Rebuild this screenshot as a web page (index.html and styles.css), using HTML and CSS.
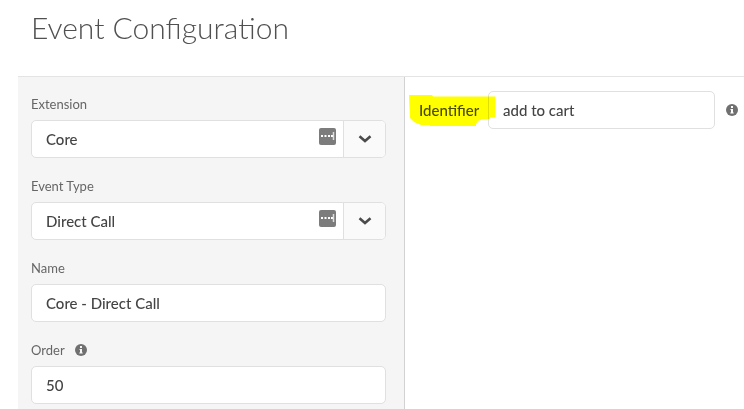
FILE: index.html
```html
<!DOCTYPE html>
<html lang="en">
<head>
    <meta charset="UTF-8">
    <meta name="viewport" content="width=device-width, initial-scale=1.0">
    <title>Event Configuration</title>
    <link rel="stylesheet" href="styles.css">
</head>
<body>
    <header class="page-header">
        <h1>Event Configuration</h1>
    </header>

    <main class="content">
        <form class="sidebar">
            <div class="field">
                <label for="extension">Extension</label>
                <div class="select-box">
                    <select id="extension">
                        <option>Core</option>
                    </select>
                    <svg class="autofill" viewBox="0 0 17 17" aria-hidden="true">
                        <rect width="17" height="17" rx="2" fill="#7c7c7c"/>
                        <path d="M2 7h2v2H2zM5.500 7h2v2h-2zM9 7h2v2H9zM12 7h2v2h-2z" fill="#fff"/>
                        <path d="M14.500 4v8" stroke="#ddd" stroke-width="1.500"/>
                    </svg>
                    <span class="arrow">
                        <svg viewBox="0 0 14 8" aria-hidden="true"><path d="M1.500 1.200L7 6l5.500-4.800"/></svg>
                    </span>
                </div>
            </div>

            <div class="field">
                <label for="eventType">Event Type</label>
                <div class="select-box">
                    <select id="eventType">
                        <option>Direct Call</option>
                    </select>
                    <svg class="autofill" viewBox="0 0 17 17" aria-hidden="true">
                        <rect width="17" height="17" rx="2" fill="#7c7c7c"/>
                        <path d="M2 7h2v2H2zM5.500 7h2v2h-2zM9 7h2v2H9zM12 7h2v2h-2z" fill="#fff"/>
                        <path d="M14.500 4v8" stroke="#ddd" stroke-width="1.500"/>
                    </svg>
                    <span class="arrow">
                        <svg viewBox="0 0 14 8" aria-hidden="true"><path d="M1.500 1.200L7 6l5.500-4.800"/></svg>
                    </span>
                </div>
            </div>

            <div class="field">
                <label for="name">Name</label>
                <input type="text" id="name" value="Core - Direct Call">
            </div>

            <div class="field">
                <label for="order">Order
                    <svg class="info" viewBox="0 0 12 12" aria-hidden="true">
                        <circle cx="6" cy="6" r="6" fill="#707070"/>
                        <path d="M5 2h2v2H5zM4.500 5H7v3.500h.7v1H4.300v-1H5V6h-.5z" fill="#f5f5f5"/>
                    </svg>
                </label>
                <input type="text" id="order" value="50">
            </div>
        </form>

        <form class="details">
            <div class="identifier">
                <label for="identifier">Identifier</label>
                <input type="text" id="identifier" value="add to cart">
                <svg class="info" viewBox="0 0 12 12" aria-hidden="true">
                    <circle cx="6" cy="6" r="6" fill="#707070"/>
                    <path d="M5 2h2v2H5zM4.500 5H7v3.500h.7v1H4.300v-1H5V6h-.5z" fill="#fff"/>
                </svg>
                <!-- marker stroke over the label -->
                <svg class="marker" viewBox="0 0 87 32" aria-hidden="true">
                    <path d="M0 0H23L24 1.500H86.500V22.500H81V24H74L69 26L67 29V31H21V30H12L5 27L1 23Z" fill="#ffff00"/>
                </svg>
            </div>
        </form>
    </main>
</body>
</html>
```
FILE: styles.css
```css
* {
    box-sizing: border-box;
}
body {
    margin: 0;
    min-height: 100vh;
    display: flex;
    flex-direction: column;
    font-family: Lato, "Open Sans", sans-serif;
    color: #4b4b4b;
    background-color: #fff;
}
.page-header {
    margin-left: 18px;
    padding: 7px 13px 29px;
    border-bottom: 1px solid #e4e4e4;
}
h1 {
    margin: 0;
    font-size: 30px;
    line-height: 40px;
    font-weight: 300;
    color: #505050;
}
.content {
    flex: 1;
    display: flex;
    margin-left: 18px;
}
.sidebar {
    width: 387px;
    padding: 16px 18px 5px 13px;
    display: flex;
    flex-direction: column;
    gap: 17px;
    background-color: #f5f5f5;
    border-right: 1px solid #d2d2d2;
}
.field label {
    display: flex;
    align-items: center;
    gap: 10px;
    margin-bottom: 5px;
    font-size: 13px;
    line-height: 22px;
    color: #666;
}
input,
select {
    width: 100%;
    height: 38px;
    padding: 0 14px;
    font-family: inherit;
    font-size: 15px;
    font-weight: 500;
    color: #444;
    background-color: #fff;
    border: 1px solid #e0e0e0;
    border-radius: 5px;
}
select {
    appearance: none;
}
.select-box {
    position: relative;
}
.autofill {
    position: absolute;
    top: 8px;
    right: 50px;
    width: 17px;
    height: 17px;
}
.arrow {
    position: absolute;
    top: 1px;
    right: 1px;
    bottom: 1px;
    width: 42px;
    display: flex;
    align-items: center;
    justify-content: center;
    background-color: #fafafa;
    border-left: 1px solid #e0e0e0;
    border-radius: 0 4px 4px 0;
    pointer-events: none;
}
.arrow svg {
    width: 14px;
    height: 8px;
    fill: none;
    stroke: #4b4b4b;
    stroke-width: 2.5;
}
.info {
    width: 12px;
    height: 12px;
    flex: none;
}
.details {
    flex: 1;
    min-width: 0;
    padding: 14px 6px 0 14px;
}
.identifier {
    position: relative;
    display: flex;
    align-items: center;
}
.identifier label {
    flex: none;
    width: 69px;
    font-size: 15px;
    font-weight: 500;
}
.identifier input {
    flex: 1;
    min-width: 0;
}
.identifier .info {
    margin-left: 11px;
}
.marker {
    position: absolute;
    top: 4px;
    left: -10px;
    width: 87px;
    height: 32px;
    mix-blend-mode: multiply;
    pointer-events: none;
}
```
